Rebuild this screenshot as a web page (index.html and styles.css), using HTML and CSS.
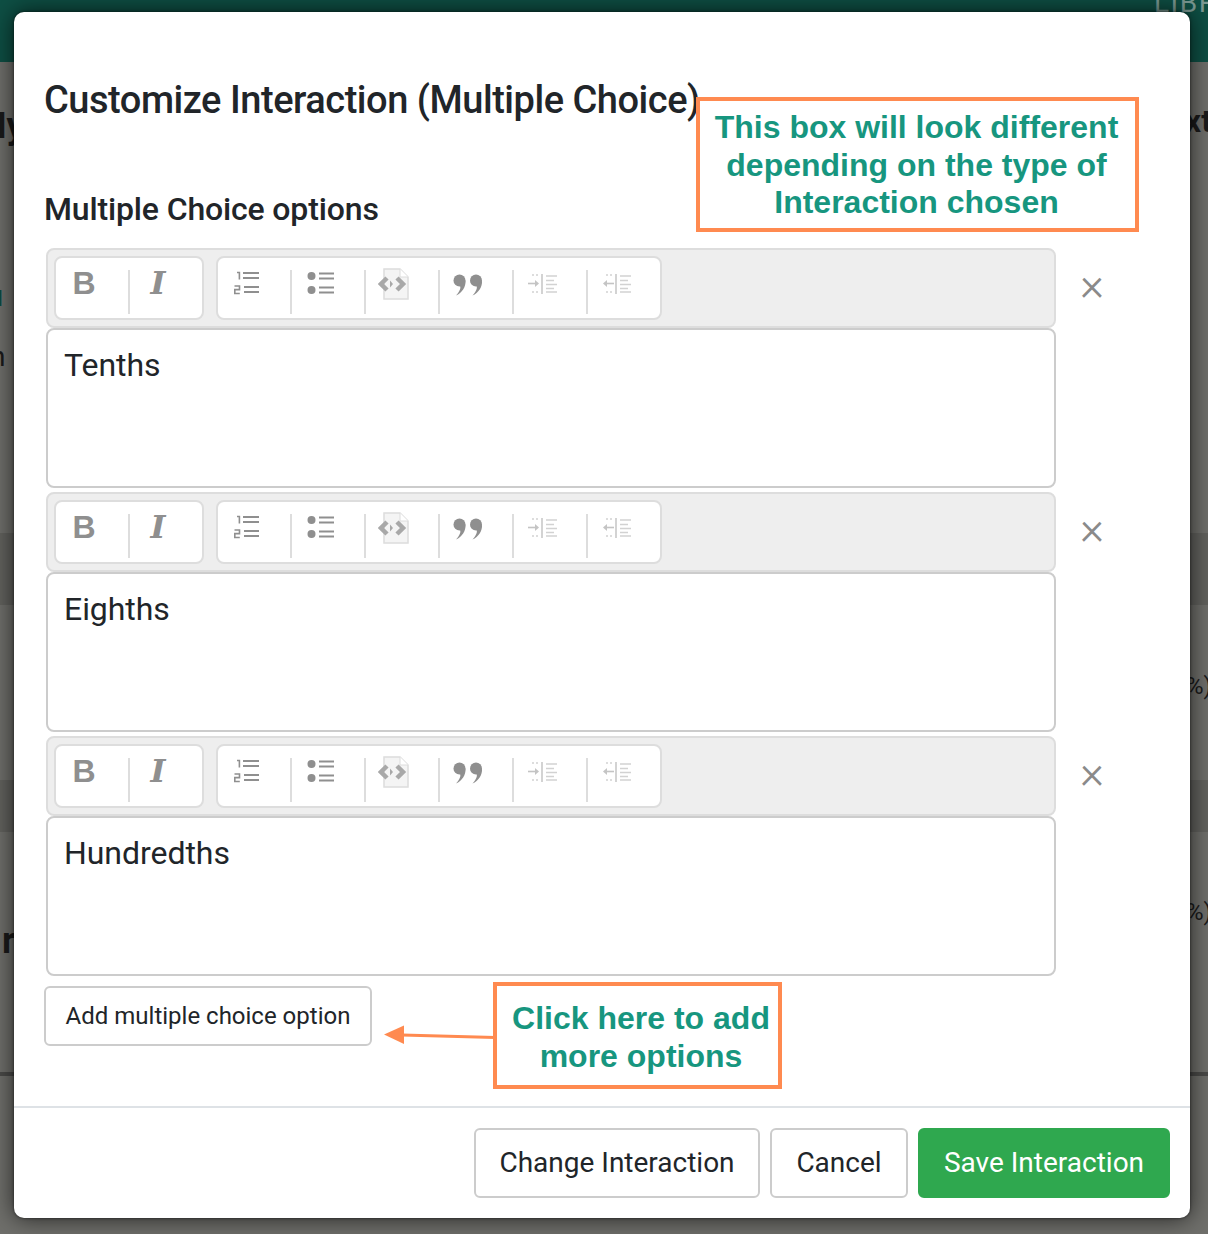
FILE: index.html
```html
<!DOCTYPE html>
<html lang="en">
<head>
    <meta charset="UTF-8">
    <title>Customize Interaction</title>
    <link rel="stylesheet" href="styles.css">
</head>
<body>

    <svg class="defs" width="0" height="0">
        <symbol id="i-ol" viewBox="0 0 26 26">
            <path d="M3 1.5h2.400v7M.5 15h5v3.600H.8v3.900h5" fill="none" stroke="#8f8f8f" stroke-width="1.600"/>
            <path d="M9 2h16M9 7h16M10 16h15M10 21h15" stroke="#8f8f8f" stroke-width="2"/>
        </symbol>
        <symbol id="i-ul" viewBox="0 0 28 26">
            <circle cx="4.500" cy="6" r="4" fill="#8f8f8f"/>
            <circle cx="4.500" cy="20" r="4" fill="#8f8f8f"/>
            <path d="M12 3.500h15M12 8.500h15M12 17.500h15M12 22.500h15" stroke="#8f8f8f" stroke-width="2"/>
        </symbol>
        <symbol id="i-code" viewBox="0 0 34 32">
            <path d="M6 1h16l8 8v22H6z" fill="#f4f4f4" stroke="#dcdcdc" stroke-width="1.500"/>
            <path d="M22 1v8h8" fill="#fff" stroke="#dcdcdc"/>
            <path d="M9 10l-6 6 6 6M19 10l6 6-6 6" fill="none" stroke="#a8a8a8" stroke-width="4.500"/>
            <path d="M12 12.500l3 3.500-3 3.500z" fill="#a8a8a8"/>
        </symbol>
        <symbol id="i-quote" viewBox="0 0 30 22">
            <circle cx="6.500" cy="6.500" r="6" fill="#8f8f8f"/>
            <path d="M12.500 6.500C13 13 9 19 3 21.500 7 17 8 14 7 12z" fill="#8f8f8f"/>
            <circle cx="23" cy="6.500" r="6" fill="#8f8f8f"/>
            <path d="M29 6.500C29.500 13 25.500 19 19.500 21.500 23.500 17 24.500 14 23.500 12z" fill="#8f8f8f"/>
        </symbol>
        <symbol id="i-indent" viewBox="0 0 30 20">
            <path d="M14 0v20" stroke="#c4c4c4" stroke-width="1.500"/>
            <path d="M18 2h11M18 6.500h8M18 10.500h11M18 14.500h8M18 18h11" stroke="#d2d2d2" stroke-width="1.600"/>
            <path d="M4 1h2M8 1h2M4 18h2M8 18h2" stroke="#d2d2d2" stroke-width="1.600"/>
            <path d="M0 9.500h8" stroke="#c4c4c4" stroke-width="1.600"/>
            <path d="M7 6l4 3.500-4 3.500z" fill="#c4c4c4"/>
        </symbol>
        <symbol id="i-outdent" viewBox="0 0 30 20">
            <path d="M14 0v20" stroke="#c4c4c4" stroke-width="1.500"/>
            <path d="M18 2h11M18 6.500h8M18 10.500h11M18 14.500h8M18 18h11" stroke="#d2d2d2" stroke-width="1.600"/>
            <path d="M4 1h2M8 1h2M4 18h2M8 18h2" stroke="#d2d2d2" stroke-width="1.600"/>
            <path d="M4 9.500h8" stroke="#c4c4c4" stroke-width="1.600"/>
            <path d="M5 6l-4 3.500 4 3.500z" fill="#c4c4c4"/>
        </symbol>
    </svg>

    <!-- page behind the dialog -->
    <div class="backdrop">
        <div class="topbar"><span class="topbar-link">LIBR</span></div>
        <div class="band band-1"></div>
        <div class="band band-2"></div>
        <div class="rule"></div>
        <span class="bg-text bg-my">My</span>
        <span class="bg-text bg-next">Next</span>
        <span class="bg-text bg-teal">u</span>
        <span class="bg-text bg-n">n</span>
        <span class="bg-text bg-r">r</span>
        <span class="bg-text bg-pct1">%)</span>
        <span class="bg-text bg-pct2">%)</span>
    </div>

    <div class="modal">
        <div class="modal-body">
            <h4 class="modal-title">Customize Interaction (Multiple Choice)</h4>
            <h5 class="section-title">Multiple Choice options</h5>

            <div class="option">
                <div class="editor">
                    <div class="toolbar">
                        <div class="tool-group">
                            <a class="tool tool-b">B</a>
                            <a class="tool tool-i">I</a>
                        </div>
                        <div class="tool-group">
                            <a class="tool"><svg class="ic-ol"><use href="#i-ol"/></svg></a>
                            <a class="tool"><svg class="ic-ul"><use href="#i-ul"/></svg></a>
                            <a class="tool"><svg class="ic-code"><use href="#i-code"/></svg></a>
                            <a class="tool"><svg class="ic-quote"><use href="#i-quote"/></svg></a>
                            <a class="tool"><svg class="ic-indent"><use href="#i-indent"/></svg></a>
                            <a class="tool"><svg class="ic-indent"><use href="#i-outdent"/></svg></a>
                        </div>
                    </div>
                    <div class="editor-area">Tenths</div>
                </div>
                <span class="option-remove">&times;</span>
            </div>

            <div class="option">
                <div class="editor">
                    <div class="toolbar">
                        <div class="tool-group">
                            <a class="tool tool-b">B</a>
                            <a class="tool tool-i">I</a>
                        </div>
                        <div class="tool-group">
                            <a class="tool"><svg class="ic-ol"><use href="#i-ol"/></svg></a>
                            <a class="tool"><svg class="ic-ul"><use href="#i-ul"/></svg></a>
                            <a class="tool"><svg class="ic-code"><use href="#i-code"/></svg></a>
                            <a class="tool"><svg class="ic-quote"><use href="#i-quote"/></svg></a>
                            <a class="tool"><svg class="ic-indent"><use href="#i-indent"/></svg></a>
                            <a class="tool"><svg class="ic-indent"><use href="#i-outdent"/></svg></a>
                        </div>
                    </div>
                    <div class="editor-area">Eighths</div>
                </div>
                <span class="option-remove">&times;</span>
            </div>

            <div class="option">
                <div class="editor">
                    <div class="toolbar">
                        <div class="tool-group">
                            <a class="tool tool-b">B</a>
                            <a class="tool tool-i">I</a>
                        </div>
                        <div class="tool-group">
                            <a class="tool"><svg class="ic-ol"><use href="#i-ol"/></svg></a>
                            <a class="tool"><svg class="ic-ul"><use href="#i-ul"/></svg></a>
                            <a class="tool"><svg class="ic-code"><use href="#i-code"/></svg></a>
                            <a class="tool"><svg class="ic-quote"><use href="#i-quote"/></svg></a>
                            <a class="tool"><svg class="ic-indent"><use href="#i-indent"/></svg></a>
                            <a class="tool"><svg class="ic-indent"><use href="#i-outdent"/></svg></a>
                        </div>
                    </div>
                    <div class="editor-area">Hundredths</div>
                </div>
                <span class="option-remove">&times;</span>
            </div>

            <button class="btn btn-add" type="button">Add multiple choice option</button>
        </div>

        <div class="modal-footer">
            <button class="btn btn-lg btn-change" type="button">Change Interaction</button>
            <button class="btn btn-lg btn-cancel" type="button">Cancel</button>
            <button class="btn btn-lg btn-save" type="button">Save Interaction</button>
        </div>
    </div>

    <!-- annotations drawn on top of the screenshot -->
    <div class="note note-top">This box will look different depending on the type of Interaction chosen</div>
    <div class="note note-add">Click here to add more options</div>
    <svg class="note-arrow" width="112" height="24" viewBox="0 0 112 24">
        <path d="M111 14.500L18 12" stroke="#ff8a50" stroke-width="3" fill="none"/>
        <path d="M0 11.500L20 2.500V21z" fill="#ff8a50"/>
    </svg>

</body>
</html>
```

FILE: styles.css
```css
body {
    margin: 0;
    width: 1208px;
    height: 1234px;
    overflow: hidden;
    position: relative;
    background-color: #6f6f6b;
    font-family: Roboto, sans-serif;
    color: #212529;
}

.defs {
    position: absolute;
}

/* page behind the dialog */
.backdrop {
    position: absolute;
    inset: 0;
    overflow: hidden;
}

.topbar {
    height: 62px;
    background-color: #0e4f44;
    position: relative;
}

.topbar-link {
    position: absolute;
    left: 1154px;
    top: -14px;
    font-size: 28px;
    letter-spacing: 1.500px;
    color: #7c9a94;
}

.band {
    position: absolute;
    left: 0;
    right: 0;
    background-color: #62625e;
}

.band-1 {
    top: 533px;
    height: 72px;
}

.band-2 {
    top: 780px;
    height: 52px;
}

.rule {
    position: absolute;
    left: 0;
    right: 0;
    top: 1072px;
    height: 4px;
    background-color: #4a4a48;
}

.bg-text {
    position: absolute;
    color: #1a1a1a;
    font-size: 30px;
}

.bg-my {
    left: -25px;
    top: 105px;
    font-size: 36px;
    font-weight: 700;
}

.bg-next {
    left: 1145px;
    top: 102px;
    font-size: 32px;
    font-weight: 700;
}

.bg-teal {
    left: -14px;
    top: 278px;
    color: #0b4a40;
    font-weight: 700;
}

.bg-n {
    left: -10px;
    top: 340px;
    font-size: 28px;
}

.bg-r {
    left: 2px;
    top: 920px;
    font-size: 36px;
    font-weight: 700;
}

.bg-pct1 {
    left: 1186px;
    top: 672px;
    font-size: 24px;
}

.bg-pct2 {
    left: 1186px;
    top: 898px;
    font-size: 24px;
}

/* dialog */
.modal {
    position: absolute;
    left: 14px;
    top: 12px;
    width: 1176px;
    height: 1206px;
    display: flex;
    flex-direction: column;
    background-color: #fff;
    border-radius: 10px;
    box-shadow: 0 0 24px rgba(0, 0, 0, 0.7), 0 0 3px rgba(0, 0, 0, 0.6);
}

.modal-body {
    flex: 1;
    padding: 0 0 0 30px;
}

.modal-title {
    margin: 66px 0 0;
    font-size: 38px;
    line-height: 44px;
    font-weight: 500;
    letter-spacing: -0.470px;
}

.section-title {
    margin: 68px 0 20px;
    font-size: 32px;
    line-height: 38px;
    font-weight: 500;
    letter-spacing: -0.150px;
}

.option {
    display: flex;
    margin: 0 0 4px 2px;
}

.editor {
    width: 1010px;
}

.toolbar {
    box-sizing: border-box;
    height: 80px;
    display: flex;
    gap: 12px;
    padding: 6px;
    background-color: #eee;
    border: 2px solid #ddd;
    border-radius: 8px;
}

.tool-group {
    height: 64px;
    box-sizing: border-box;
    display: flex;
    background-color: #fff;
    border: 2px solid #ddd;
    border-radius: 8px;
}

.tool {
    width: 74px;
    height: 44px;
    margin-top: 12px;
    box-sizing: border-box;
    display: flex;
    justify-content: center;
    align-items: flex-start;
    border-right: 2px solid #ddd;
    color: #8f8f8f;
}

.tool:last-child {
    width: 72px;
    border-right: 0;
}

.tool-b {
    font-family: "Liberation Sans", sans-serif;
    font-size: 32px;
    font-weight: 700;
    line-height: 26px;
    padding-right: 16px;
}

.tool-i {
    font-family: "DejaVu Serif", serif;
    font-size: 32px;
    font-weight: 700;
    font-style: italic;
    line-height: 26px;
    padding-right: 16px;
}

.ic-ol {
    width: 26px;
    height: 26px;
    margin: 1px 14px 0 0;
}

.ic-ul {
    width: 28px;
    height: 26px;
    margin: 0 14px 0 0;
}

.ic-code {
    width: 34px;
    height: 32px;
    margin: -2px 14px 0 0;
}

.ic-quote {
    width: 30px;
    height: 22px;
    margin: 4px 16px 0 0;
}

.ic-indent {
    width: 30px;
    height: 22px;
    margin: 3px 14px 0 0;
}

.editor-area {
    box-sizing: border-box;
    height: 160px;
    padding: 15px 16px;
    background-color: #fff;
    border: 2px solid #ccc;
    border-radius: 8px;
    font-size: 32px;
    line-height: 40px;
    letter-spacing: -0.050px;
}

.option-remove {
    width: 72px;
    height: 80px;
    text-align: center;
    font-size: 46px;
    line-height: 72px;
    font-weight: 300;
    color: #8a8a8a;
}

.btn {
    box-sizing: border-box;
    background-color: #fff;
    border: 2px solid #ccc;
    border-radius: 6px;
    font-family: Roboto, sans-serif;
    color: #212529;
}

.btn-add {
    display: block;
    width: 328px;
    height: 60px;
    margin-top: 10px;
    padding: 0;
    font-size: 24px;
}

.modal-footer {
    height: 112px;
    box-sizing: border-box;
    display: flex;
    justify-content: flex-end;
    gap: 10px;
    padding: 20px 20px 0 0;
    border-top: 2px solid #dee2e6;
}

.btn-lg {
    height: 70px;
    padding: 0 0 2px;
    font-size: 28px;
}

.btn-change {
    width: 286px;
}

.btn-cancel {
    width: 138px;
}

.btn-save {
    width: 252px;
    background-color: #2fa84f;
    border-color: #2fa84f;
    color: #fff;
}

/* annotations */
.note {
    position: absolute;
    box-sizing: border-box;
    background-color: #fff;
    border: 4px solid #ff8a50;
    color: #17967f;
    font-family: "Liberation Sans", sans-serif;
    font-weight: 700;
    font-size: 32px;
    line-height: 37.600px;
    text-align: center;
}

.note-top {
    left: 696px;
    top: 97px;
    width: 443px;
    height: 135px;
    padding: 8px 9px 0 7px;
}

.note-add {
    left: 493px;
    top: 982px;
    width: 289px;
    height: 107px;
    padding: 14px 6px 0 13px;
}

.note-arrow {
    position: absolute;
    left: 384px;
    top: 1023px;
}
```
